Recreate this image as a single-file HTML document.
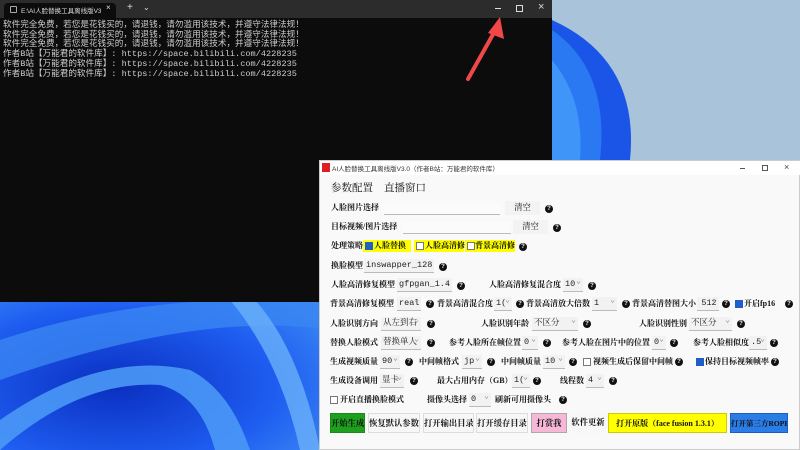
<!DOCTYPE html>
<html><head><meta charset="utf-8"><style>
*{margin:0;padding:0;box-sizing:border-box}
body{width:800px;height:450px;overflow:hidden;position:relative;background:#a9c3da;font-family:"Liberation Serif","Noto Serif CJK SC",serif}
.a{position:absolute;white-space:nowrap}
.t{font-size:8px;color:#111;line-height:14px;font-weight:bold}
.q{width:8px;height:8px;border-radius:50%;background:#111;color:#fff;font-size:6px;line-height:8px;text-align:center;font-family:"Liberation Sans",sans-serif;font-weight:bold}
.sel{background:#f2f2f2;border-bottom:1px solid #bbb;font-family:"Liberation Mono","Noto Serif CJK SC",monospace;font-size:8.5px;line-height:13px;height:14px;padding-left:2px;color:#222;overflow:hidden}
.sel:after{content:"⌄";position:absolute;right:2px;top:-3px;color:#888;font-size:8px}
.inp{background:#fbfbfb;border-bottom:1px solid #bbb;height:12px}
.cb{width:8px;height:8px;border:1px solid #777;background:#fff}
.cb.on{background:#1f5fc7;border-color:#1f5fc7}
.btn{height:20px;font-size:8.3px;line-height:19px;text-align:center;font-weight:bold;color:#111;background:#f7f7f7;border:1px solid #ddd;overflow:hidden}
.term{font-family:"Liberation Mono","Noto Sans CJK SC",monospace;font-size:8.6px;color:#ccc;line-height:9.7px}
</style></head><body>
<svg class="a" style="left:0;top:0" width="800" height="450">
<defs>
<radialGradient id="g1" cx="0.35" cy="0.6" r="0.8"><stop offset="0" stop-color="#0a2fc0"/><stop offset="0.6" stop-color="#1e5cf0"/><stop offset="1" stop-color="#3d8cf5"/></radialGradient>
</defs>
<rect x="0" y="290" width="330" height="160" fill="url(#g1)"/>
<path d="M0 340 Q120 300 250 300 L330 300 L330 330 Q200 310 0 380Z" fill="#3a86f2" opacity="0.8"/>
<path d="M0 420 Q100 350 190 370 Q230 390 250 450 L215 450 Q200 395 160 385 Q80 380 0 450Z" fill="#4a98f6" opacity="0.9"/>
<path d="M230 300 Q280 360 300 450 L320 450 Q300 350 255 300Z" fill="#6ab0fa" opacity="0.8"/>
<path d="M552 20 Q640 60 630 160 L552 160Z" fill="#1a55e8"/>
<path d="M552 30 Q610 70 600 160 L552 160Z" fill="#2a78f2"/>
<path d="M552 60 Q585 100 580 160 L552 160Z" fill="#3f95f8"/>
</svg>
<!-- terminal -->
<div class="a" style="left:0;top:0;width:552px;height:302px;background:#0c0c0c"></div>
<div class="a" style="left:0;top:0;width:552px;height:18px;background:#2c2c2c"></div>
<div class="a" style="left:4px;top:3px;width:112px;height:15px;background:#0c0c0c;border-radius:4px 4px 0 0"></div>
<div class="a" style="left:10px;top:6px;width:7px;height:7px;border:1px solid #aaa;border-radius:1px"></div>
<div class="a" style="left:21px;top:5px;width:80px;overflow:hidden;font-size:6.5px;color:#ddd;font-family:'Liberation Sans','Noto Sans CJK SC',sans-serif">E:\AI人脸替换工具离线版V3.0\</div>
<div class="a" style="left:106px;top:3px;font-size:8px;color:#ddd;font-family:'Liberation Sans',sans-serif">×</div>
<div class="a" style="left:127px;top:2px;font-size:10px;color:#ddd;font-family:'Liberation Sans',sans-serif">+</div>
<div class="a" style="left:143px;top:3px;font-size:8px;color:#ddd;font-family:'Liberation Sans',sans-serif">⌄</div>
<div class="a" style="left:495px;top:8px;width:6px;height:1px;background:#ddd"></div>
<div class="a" style="left:516px;top:5px;width:7px;height:7px;border:1px solid #ddd"></div>
<div class="a" style="left:538px;top:1px;font-size:11px;color:#ddd;font-family:'Liberation Sans',sans-serif">×</div>
<div class="a term" style="left:3px;top:21px">软件完全免费，若您是花钱买的，请退钱，请勿滥用该技术，并遵守法律法规！<br>软件完全免费，若您是花钱买的，请退钱，请勿滥用该技术，并遵守法律法规！<br>软件完全免费，若您是花钱买的，请退钱，请勿滥用该技术，并遵守法律法规！<br>作者B站【万能君的软件库】: https://space.bilibili.com/4228235<br>作者B站【万能君的软件库】: https://space.bilibili.com/4228235<br>作者B站【万能君的软件库】: https://space.bilibili.com/4228235</div>
<svg class="a" style="left:460px;top:15px" width="50" height="70"><path d="M8 64 L36 14" stroke="#f04848" stroke-width="4" stroke-linecap="round"/><path d="M40 2 L28 18 L44 24Z" fill="#f04848"/></svg>
<!-- app -->
<div class="a" style="left:319px;top:160px;width:481px;height:290px;background:#f9f9f9;border:1px solid #ccc"></div>
<div class="a" style="left:320px;top:161px;width:480px;height:14px;background:#fff"></div>
<div class="a" style="left:322px;top:163px;width:8px;height:9px;background:#e02020"></div>
<div class="a" style="left:332px;top:163px;font-size:6.5px;color:#333;font-family:'Liberation Sans','Noto Sans CJK SC',sans-serif">AI人脸替换工具离线版V3.0（作者B站：万能君的软件库）</div>
<div class="a" style="left:740px;top:168px;width:5px;height:1px;background:#555"></div>
<div class="a" style="left:762px;top:165px;width:6px;height:6px;border:1px solid #555"></div>
<div class="a" style="left:784px;top:162px;font-size:9px;color:#444;font-family:'Liberation Sans',sans-serif">×</div>
<div class="a" style="left:331px;top:180px;font-size:10.5px;color:#111">参数配置</div>
<div class="a" style="left:384px;top:180px;font-size:10.5px;color:#111">直播窗口</div>

<div class="a t" style="left:331px;top:201px">人脸图片选择</div>
<div class="a inp" style="left:384px;top:203px;width:116px"></div>
<div class="a btn" style="left:505px;top:201px;width:35px;height:14px;line-height:14px;font-weight:normal;border:none;background:#f3f3f3">清空</div>
<div class="a q" style="left:545px;top:205px">?</div>

<div class="a t" style="left:331px;top:220px">目标视频/图片选择</div>
<div class="a inp" style="left:403px;top:222px;width:108px"></div>
<div class="a btn" style="left:513px;top:220px;width:35px;height:14px;line-height:14px;font-weight:normal;border:none;background:#f3f3f3">清空</div>
<div class="a q" style="left:553px;top:224px">?</div>

<div class="a t" style="left:331px;top:239px">处理策略</div>
<div class="a" style="left:363px;top:240px;width:48px;height:12px;background:#ffff00"></div>
<div class="a cb on" style="left:365px;top:242px"></div>
<div class="a t" style="left:374px;top:239px">人脸替换</div>
<div class="a" style="left:414px;top:240px;width:50px;height:12px;background:#ffff00"></div>
<div class="a cb" style="left:416px;top:242px"></div>
<div class="a t" style="left:425px;top:239px">人脸高清修</div>
<div class="a" style="left:465px;top:240px;width:50px;height:12px;background:#ffff00"></div>
<div class="a cb" style="left:467px;top:242px"></div>
<div class="a t" style="left:475px;top:239px">背景高清修</div>
<div class="a q" style="left:519px;top:243px">?</div>

<div class="a t" style="left:331px;top:259px">换脸模型</div>
<div class="a sel" style="left:364px;top:259px;width:70px">inswapper_128</div>
<div class="a q" style="left:439px;top:263px">?</div>

<div class="a t" style="left:331px;top:278px">人脸高清修复模型</div>
<div class="a sel" style="left:397px;top:278px;width:55px">gfpgan_1.4</div>
<div class="a q" style="left:457px;top:282px">?</div>
<div class="a t" style="left:489px;top:278px">人脸高清修复混合度</div>
<div class="a sel" style="left:563px;top:278px;width:20px">10</div>
<div class="a q" style="left:588px;top:282px">?</div>

<div class="a t" style="left:330px;top:297px">背景高清修复模型</div>
<div class="a sel" style="left:397px;top:297px;width:24px">real</div>
<div class="a q" style="left:426px;top:300px">?</div>
<div class="a t" style="left:437px;top:297px">背景高清混合度</div>
<div class="a sel" style="left:494px;top:297px;width:18px">1(</div>
<div class="a q" style="left:516px;top:300px">?</div>
<div class="a t" style="left:526px;top:297px">背景高清放大倍数</div>
<div class="a sel" style="left:592px;top:297px;width:25px">1</div>
<div class="a q" style="left:622px;top:300px">?</div>
<div class="a t" style="left:632px;top:297px">背景高清替图大小</div>
<div class="a sel" style="left:697px;top:297px;width:22px;text-align:center">512</div>
<div class="a q" style="left:722px;top:300px">?</div>
<div class="a cb on" style="left:735px;top:300px"></div>
<div class="a t" style="left:744px;top:297px">开启fp16</div>
<div class="a q" style="left:785px;top:300px">?</div>

<div class="a t" style="left:330px;top:317px">人脸识别方向</div>
<div class="a sel" style="left:381px;top:317px;width:40px">从左到右</div>
<div class="a q" style="left:427px;top:320px">?</div>
<div class="a t" style="left:481px;top:317px">人脸识别年龄</div>
<div class="a sel" style="left:532px;top:317px;width:46px">不区分</div>
<div class="a q" style="left:583px;top:320px">?</div>
<div class="a t" style="left:639px;top:317px">人脸识别性别</div>
<div class="a sel" style="left:689px;top:317px;width:43px">不区分</div>
<div class="a q" style="left:737px;top:320px">?</div>

<div class="a t" style="left:330px;top:336px">替换人脸模式</div>
<div class="a sel" style="left:381px;top:336px;width:40px">替换单人</div>
<div class="a q" style="left:427px;top:339px">?</div>
<div class="a t" style="left:449px;top:336px">参考人脸所在帧位置</div>
<div class="a sel" style="left:522px;top:336px;width:16px">0</div>
<div class="a q" style="left:543px;top:339px">?</div>
<div class="a t" style="left:562px;top:336px">参考人脸在图片中的位置</div>
<div class="a sel" style="left:652px;top:336px;width:14px">0</div>
<div class="a q" style="left:670px;top:339px">?</div>
<div class="a t" style="left:693px;top:336px">参考人脸相似度</div>
<div class="a sel" style="left:749px;top:336px;width:18px">.5</div>
<div class="a q" style="left:770px;top:339px">?</div>

<div class="a t" style="left:330px;top:355px">生成视频质量</div>
<div class="a sel" style="left:380px;top:355px;width:20px">90</div>
<div class="a q" style="left:405px;top:358px">?</div>
<div class="a t" style="left:419px;top:355px">中间帧格式</div>
<div class="a sel" style="left:462px;top:355px;width:20px">jp</div>
<div class="a q" style="left:487px;top:358px">?</div>
<div class="a t" style="left:501px;top:355px">中间帧质量</div>
<div class="a sel" style="left:543px;top:355px;width:22px">10</div>
<div class="a q" style="left:569px;top:358px">?</div>
<div class="a cb" style="left:583px;top:358px"></div>
<div class="a t" style="left:593px;top:355px">视频生成后保留中间帧</div>
<div class="a q" style="left:675px;top:358px">?</div>
<div class="a cb on" style="left:696px;top:358px"></div>
<div class="a t" style="left:705px;top:355px">保持目标视频帧率</div>
<div class="a q" style="left:771px;top:358px">?</div>

<div class="a t" style="left:330px;top:374px">生成设备调用</div>
<div class="a sel" style="left:380px;top:374px;width:24px">显卡</div>
<div class="a q" style="left:410px;top:377px">?</div>
<div class="a t" style="left:437px;top:374px">最大占用内存（GB）</div>
<div class="a sel" style="left:512px;top:374px;width:18px">1(</div>
<div class="a q" style="left:533px;top:377px">?</div>
<div class="a t" style="left:560px;top:374px">线程数</div>
<div class="a sel" style="left:586px;top:374px;width:18px">4</div>
<div class="a q" style="left:609px;top:377px">?</div>

<div class="a cb" style="left:330px;top:396px"></div>
<div class="a t" style="left:340px;top:393px">开启直播换脸模式</div>
<div class="a t" style="left:427px;top:393px">摄像头选择</div>
<div class="a sel" style="left:469px;top:393px;width:22px">0</div>
<div class="a t" style="left:495px;top:393px">刷新可用摄像头</div>
<div class="a q" style="left:559px;top:396px">?</div>

<div class="a btn" style="left:330px;top:413px;width:35px;background:#1ea01e;border-color:#1a8a1a">开始生成</div>
<div class="a btn" style="left:368px;top:413px;width:52px">恢复默认参数</div>
<div class="a btn" style="left:423px;top:413px;width:51px">打开输出目录</div>
<div class="a btn" style="left:476px;top:413px;width:52px">打开缓存目录</div>
<div class="a btn" style="left:531px;top:413px;width:36px;background:#f7b8d8;border-color:#aaa">打赏我</div>
<div class="a btn" style="left:570px;top:413px;width:36px;border:none">软件更新</div>
<div class="a btn" style="left:608px;top:413px;width:119px;background:#ffff00;border-color:#cc0;font-size:8px">打开原版（face fusion 1.3.1）</div>
<div class="a btn" style="left:730px;top:413px;width:58px;background:#2a7de6;border-color:#1a5fc0;font-size:7.5px">打开第三方ROPE</div>
</body></html>
